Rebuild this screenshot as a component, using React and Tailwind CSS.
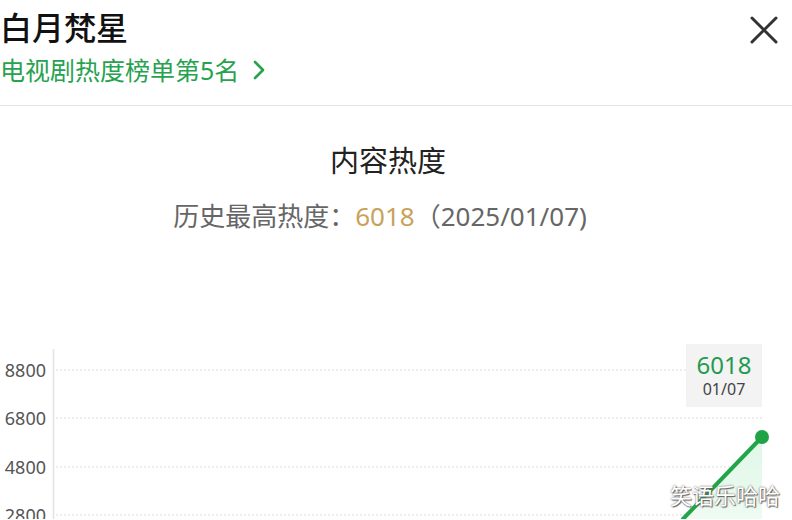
import React from "react";

const font = { fontFamily: '"Noto Sans", "Noto Sans CJK SC", sans-serif' };

const gridRows = [
  { label: "8800", y: 31 },
  { label: "6800", y: 79 },
  { label: "4800", y: 128 },
  { label: "2800", y: 176 },
];

function HeatChart() {
  return (
    <div className="relative h-[180px] w-full">
      <svg width="792" height="180" className="block">
        <defs>
          <linearGradient id="area" x1="0" y1="0" x2="0" y2="1">
            <stop offset="0%" stopColor="#dff7e7" />
            <stop offset="100%" stopColor="#eefbf2" />
          </linearGradient>
        </defs>
        <line x1="53.5" y1="10" x2="53.5" y2="180" stroke="#e3e3e3" strokeWidth="1.5" />
        {gridRows.map((r) => (
          <g key={r.label}>
            <line x1="56" y1={r.y} x2="762" y2={r.y} stroke="#dcdcdc" strokeWidth="1.2" strokeDasharray="2 2" />
            <text x="46" y={r.y + 7} textAnchor="end" fontSize="18" fill="#555" style={font}>
              {r.label}
            </text>
          </g>
        ))}
        <polygon points="762,98 683,180 762,180" fill="url(#area)" />
        <line x1="762" y1="98" x2="683" y2="180" stroke="#22a449" strokeWidth="4" strokeLinecap="round" />
        <circle cx="762" cy="98" r="7" fill="#1ea446" />
      </svg>

      <div className="absolute left-[686px] top-[5px] flex h-[63px] w-[76px] flex-col items-center justify-center bg-[#f2f3f2]">
        <span className="text-[24px] leading-[27px] text-[#249a50]" style={font}>6018</span>
        <span className="text-[16px] leading-[22px] text-[#444]" style={font}>01/07</span>
      </div>
    </div>
  );
}

export default function App() {
  return (
    <div className="relative h-[520px] w-[792px] overflow-hidden bg-white" style={font}>
      <div className="flex items-start justify-between border-b border-[#e4e4e4] pb-[19px] pt-[8px]">
        <div>
          <div className="text-[32px] font-medium leading-[40px] text-[#111]">白月梵星</div>
          <div className="mt-[6px] flex items-center gap-[12px] text-[25px] leading-[32px] text-[#27a24f]">
            <span>电视剧热度榜单第5名</span>
            <svg width="16" height="20" viewBox="0 0 16 20">
              <path d="M4 2 L12 10 L4 18" fill="none" stroke="#27a24f" strokeWidth="2.6" strokeLinecap="round" strokeLinejoin="round" />
            </svg>
          </div>
        </div>
        <svg width="30" height="30" viewBox="0 0 30 30" className="mr-[13px] mt-[7px]">
          <path d="M3 3 L27 27 M27 3 L3 27" stroke="#333" strokeWidth="3" strokeLinecap="round" />
        </svg>
      </div>

      <div className="mt-[37px] flex flex-col items-center">
        <div className="pr-[16px] text-[29px] leading-[36px] text-[#222]">内容热度</div>
        <div className="mt-[21px] pr-[32px] text-[26px] leading-[32px] text-[#666]">
          历史最高热度：<span className="text-[#c9a25a]">6018</span>（2025/01/07)
        </div>
      </div>

      <div className="mt-[107px]">
        <HeatChart />
      </div>

      <div className="absolute bottom-[12px] right-[12px] text-[22px] leading-[26px] text-white [text-shadow:0_0_2px_#555,1px_1px_1px_#666]">
        笑语乐哈哈
      </div>
    </div>
  );
}
